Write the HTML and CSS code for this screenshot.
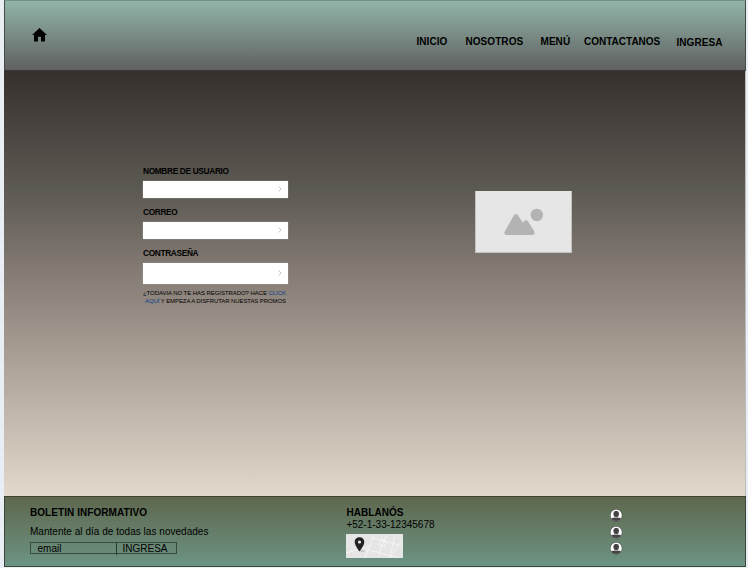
FILE: index.html
```html
<!DOCTYPE html>
<html lang="es">
<head>
<meta charset="utf-8">
<title>Registro</title>
<link rel="stylesheet" href="styles.css">
</head>
<body>
<div class="page">
  <header class="header">
    <svg class="home" viewBox="0 0 15 14"><path d="M7.5 0L0 7H2V13.5H6V8.7H9V13.5H13V7H15Z"/></svg>
    <nav class="nav">
      <span>INICIO</span><span>NOSOTROS</span><span>MENÚ</span><span class="tight">CONTACTANOS</span><span class="login">INGRESA</span>
    </nav>
  </header>
  <main class="main">
    <form class="form">
      <label>NOMBRE DE USUARIO</label>
      <div class="field"><svg viewBox="0 0 4 6"><path d="M.7.5L3 3L.7 5.5"/></svg></div>
      <label>CORREO</label>
      <div class="field"><svg viewBox="0 0 4 6"><path d="M.7.5L3 3L.7 5.5"/></svg></div>
      <label>CONTRASEÑA</label>
      <div class="field tall"><svg viewBox="0 0 4 6"><path d="M.7.5L3 3L.7 5.5"/></svg></div>
      <p class="note"><span class="line one">¿TODAVIA NO TE HAS REGISTRADO? HACE <a>CLICK</a></span><span class="line two"><a>AQUÍ</a> Y EMPEZA A DISFRUTAR NUESTAS PROMOS</span></p>
    </form>
    <div class="picture">
      <svg viewBox="0 0 97 62"><path d="M30 40L38.500 25Q41 21 43.500 25L47.800 31.800L49 30.300Q51 28 53 30.300L59 40Q61 44 57 44H32Q28 44 30 40Z"/><circle cx="61.800" cy="24" r="6.200"/></svg>
    </div>
  </main>
  <footer class="footer">
    <section class="news">
      <h2>BOLETIN INFORMATIVO</h2>
      <p class="copy">Mantente al día de todas las novedades</p>
      <div class="subscribe"><span class="email">email</span><span class="send">INGRESA</span></div>
    </section>
    <section class="contact">
      <h2>HABLANÓS</h2>
      <p class="phone">+52-1-33-12345678</p>
      <svg class="map" viewBox="0 0 57 24">
        <rect width="57" height="24" fill="#e5e5e5"/>
        <g fill="none" stroke="#f8f8f8" stroke-width=".8">
          <path d="M28 0L19 24M0 19L25 12M19 15L53 24M26 4L57 12M41 0L32 21M49 0L44 24M57 5L46 20M35 5L33 11L39 13L40 7Z"/>
        </g>
        <path d="M14.500 17H18.500" stroke="#aaa"/>
        <path fill="#222" fill-rule="evenodd" d="M13.500 3.300C10.500 3.300 8.700 5.500 8.700 8C8.700 11.500 13.500 17.500 13.500 17.500S18.300 11.500 18.300 8C18.300 5.500 16.500 3.300 13.500 3.300ZM13.500 6.400A1.600 1.600 0 1 1 13.500 9.600A1.600 1.600 0 1 1 13.500 6.400Z"/>
      </svg>
    </section>
    <section class="people">
      <svg viewBox="0 0 13 13"><use href="#user"/></svg>
      <svg viewBox="0 0 13 13"><use href="#user"/></svg>
      <svg viewBox="0 0 13 13"><use href="#user"/></svg>
    </section>
  </footer>
</div>
<svg class="defs"><defs>
  <clipPath id="disc"><circle cx="6.200" cy="6.200" r="5.900"/></clipPath>
  <g id="user"><circle cx="6.200" cy="6.200" r="5.900" fill="#fff"/><g clip-path="url(#disc)" fill="#444"><rect x="3.500" y="2" width="5.400" height="6" rx="2.200"/><path d="M.7 13V9.900Q2 8.600 6.200 8.600T11.700 9.900V13Z"/></g><circle cx="6.200" cy="6.200" r="6" fill="none" stroke="#444" stroke-width=".6"/></g>
</defs></svg>
</body>
</html>
```
FILE: styles.css
```css
* { box-sizing: border-box; }
body { margin: 0; background: #e9eef5; font-family: "Liberation Sans", Arial, sans-serif; color: #000; }
h2, p { margin: 0; font-size: 10px; line-height: 12px; white-space: nowrap; }
h2 { letter-spacing: .06px; }
.page { width: 742px; height: 568px; margin-left: 4px; display: flex; flex-direction: column; }
.header { height: 71px; flex: none; display: flex; align-items: flex-start; justify-content: space-between; background: linear-gradient(#91b5a8, #606060); border: 1px solid #444b47; border-top-color: #769087; border-bottom-color: #383836; padding: 27px 0 0 27px; }
.home { width: 15px; height: 14px; }
.nav { width: 328.500px; padding-top: 8px; display: grid; grid-template-columns: 49px 75px 43.500px 92.500px 68.500px; font-size: 10px; line-height: 12px; font-weight: bold; letter-spacing: .06px; }
.tight { letter-spacing: 0; }
.login { padding-top: 1px; }
.main { height: 425px; flex: none; display: flex; justify-content: space-between; align-items: flex-start; background: linear-gradient(#35302c, #5d5953 28%, #877e77 49%, #afa499 70%, #e2d8cc); border-right: 1px solid #bbb; padding: 94px 173.500px 0 139px; }
.form { width: 144.500px; font-size: 8.300px; display: flex; flex-direction: column; }
.form label { height: 12px; line-height: 12px; font-weight: bold; letter-spacing: -.33px; margin-bottom: 4px; }
.field { height: 16.500px; margin-bottom: 8.500px; background: #fff; display: flex; align-items: center; justify-content: flex-end; padding-right: 6px; box-shadow: 0 0 1px #bbb; }
.field svg { width: 4px; height: 6px; fill: none; stroke: #aaa; stroke-width: .7; }
.tall { height: 20.500px; margin-bottom: 5.500px; }
.note { font-size: 6px; line-height: 8px; letter-spacing: -.06px; }
.line { display: block; }
.two { padding-left: 2px; letter-spacing: -.09px; }
.note a { color: #0b3e8c; }
.picture { width: 97px; height: 62px; margin-top: 26px; background: #e6e6e6; border: 1px solid #c4c2bf; border-top: 0; }
.picture svg { display: block; width: 97px; height: 62px; margin-left: -1px; fill: #b3b3b3; }
.footer { height: 71px; flex: none; display: grid; grid-template-columns: 316.400px 263.600px 1fr; background: linear-gradient(#5e674d, #6c9484); border: 1px solid #3b4639; border-top-color: #42402f; padding: 10px 0 0 25px; }
.copy { margin-top: 7px; letter-spacing: .03px; }
.subscribe { width: 147px; height: 12px; margin-top: 4px; display: grid; grid-template-columns: 86px 1fr; border: 1px solid #374c3e; font-size: 10px; line-height: 12px; }
.email { padding-left: 6.500px; border-right: 1px solid #263a2e; }
.send { padding-left: 5.500px; }
.map { display: block; width: 57px; height: 24px; margin-top: 3px; }
.people { display: flex; flex-direction: column; gap: 3.500px; padding-top: 2px; }
.people svg { width: 13px; height: 13px; display: block; }
.defs { position: absolute; width: 0; height: 0; }
```
